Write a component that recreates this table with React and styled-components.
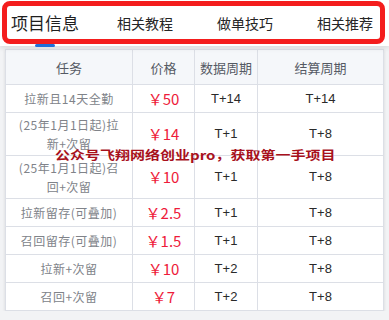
import React from "react";
import styled, { createGlobalStyle } from "styled-components";

const GlobalStyle = createGlobalStyle`
  html, body {
    margin: 0;
    padding: 0;
    background: #f2f3f5;
    font-family: "Noto Sans CJK SC", "Noto Sans", sans-serif;
  }
`;

const tabs = ["项目信息", "相关教程", "做单技巧", "相关推荐"];

const rows = [
  { task: "拉新且14天全勤", price: "￥50", data: "T+14", settle: "T+14" },
  { task: "(25年1月1日起)拉新+次留", price: "￥14", data: "T+1", settle: "T+8" },
  { task: "(25年1月1日起)召回+次留", price: "￥10", data: "T+1", settle: "T+8" },
  { task: "拉新留存(可叠加)", price: "￥2.5", data: "T+1", settle: "T+8" },
  { task: "召回留存(可叠加)", price: "￥1.5", data: "T+1", settle: "T+8" },
  { task: "拉新+次留", price: "￥10", data: "T+2", settle: "T+8" },
  { task: "召回+次留", price: "￥7", data: "T+2", settle: "T+8" },
];

const App = () => {
  return (
    <>
      <GlobalStyle />
      <Header>
        <Frame>
          <TabList>
            {tabs.map((t, i) => (
              <Tab key={t} active={i === 0}>
                {t}
              </Tab>
            ))}
          </TabList>
        </Frame>
      </Header>

      <Content>
        <Table>
          <colgroup>
            <col style={{ width: 127 }} />
            <col style={{ width: 62 }} />
            <col style={{ width: 63 }} />
            <col />
          </colgroup>
          <thead>
            <tr>
              <Th>任务</Th>
              <Th>价格</Th>
              <Th>数据周期</Th>
              <Th>结算周期</Th>
            </tr>
          </thead>
          <tbody>
            {rows.map((r) => (
              <tr key={r.task}>
                <TaskCell>{r.task}</TaskCell>
                <PriceCell>{r.price}</PriceCell>
                <PeriodCell>{r.data}</PeriodCell>
                <PeriodCell>{r.settle}</PeriodCell>
              </tr>
            ))}
          </tbody>
        </Table>
        <Watermark>公众号飞翔网络创业pro，获取第一手项目</Watermark>
      </Content>
    </>
  );
};

const Header = styled.header`
  height: 46px;
  padding: 1px 4px 0 2px;
  box-sizing: border-box;
  background: #fff;
  box-shadow: 0 2px 5px rgba(0, 0, 0, 0.1);
  position: relative;
  z-index: 1;
`;

const Frame = styled.div`
  height: 43px;
  box-sizing: border-box;
  border: 5px solid #f41d1d;
  border-radius: 8px;
`;

const TabList = styled.div`
  display: grid;
  grid-template-columns: repeat(4, 100px);
  margin-left: -12px;
  height: 100%;
`;

const Tab = styled.div`
  position: relative;
  display: flex;
  align-items: center;
  justify-content: center;
  font-size: ${(p) => (p.active ? "17px" : "14px")};
  color: ${(p) => (p.active ? "#1f1f1f" : "#262626")};
  white-space: nowrap;

  &::after {
    content: "";
    display: ${(p) => (p.active ? "block" : "none")};
    position: absolute;
    left: 50%;
    bottom: -8px;
    width: 20px;
    height: 3px;
    margin-left: -10px;
    border-radius: 2px;
    background: #1f6fd8;
  }
`;

const Content = styled.main`
  position: relative;
  padding: 3px 5px 0 5px;
`;

const Table = styled.table`
  width: 100%;
  table-layout: fixed;
  border-collapse: collapse;
  background: #fff;
  border: 1px solid #dcdfe6;
  box-shadow: 0 1px 3px rgba(0, 0, 0, 0.12);
`;

const Th = styled.th`
  height: 34px;
  padding: 0;
  background: #f5f7fa;
  border: 1px solid #dcdfe6;
  font-size: 13px;
  font-weight: normal;
  color: #555a64;
  text-align: center;
`;

const Cell = styled.td`
  height: 28px;
  padding: 3px 4px;
  border: 1px solid #dcdfe6;
  text-align: center;
  line-height: 18px;
  box-sizing: border-box;
`;

const TaskCell = styled(Cell)`
  padding: 2px 12px;
  font-size: 12px;
  letter-spacing: 0.5px;
  line-height: 19px;
  color: #808389;
`;

const PriceCell = styled(Cell)`
  font-size: 15px;
  color: #ee1b3a;
`;

const PeriodCell = styled(Cell)`
  font-family: "Liberation Sans", Arial, sans-serif;
  font-size: 13px;
  color: #2a2a2a;
`;

const Watermark = styled.div`
  position: absolute;
  left: 55px;
  top: 98px;
  font-size: 15px;
  font-weight: bold;
  color: #a8111c;
  white-space: nowrap;
  transform: scaleY(0.8);
  transform-origin: left center;
  pointer-events: none;
`;

export default App;
